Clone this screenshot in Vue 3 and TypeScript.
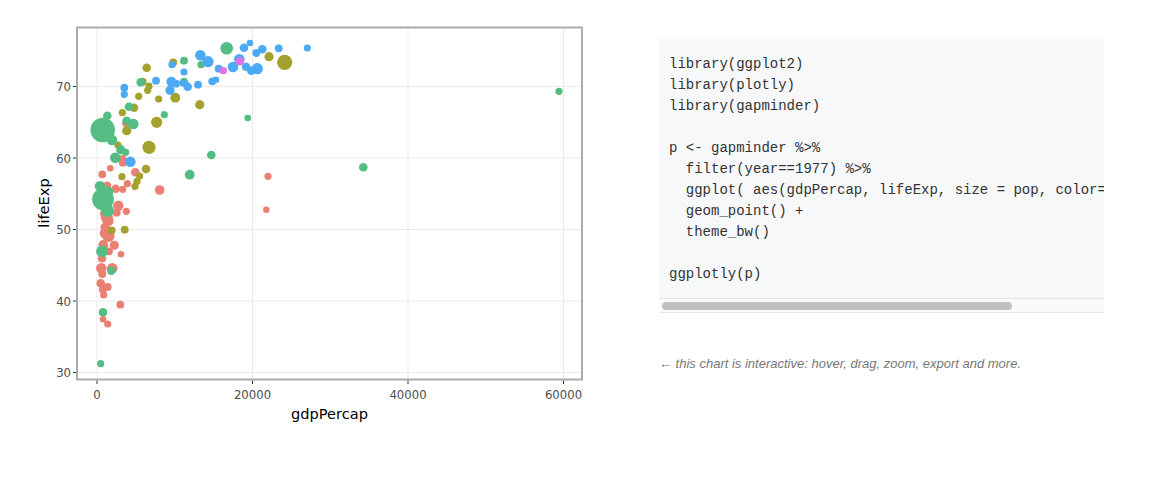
<script setup lang="ts">
type P = [number, number, number]
interface Series { color: string; pts: P[] }

const code = `library(ggplot2)
library(plotly)
library(gapminder)

p <- gapminder %>%
  filter(year==1977) %>%
  ggplot( aes(gdpPercap, lifeExp, size = pop, color=continent)) +
  geom_point() +
  theme_bw()

ggplotly(p)`

const grow = 0.6

const xTicks = [
  { x: 97, label: '0' },
  { x: 252.5, label: '20000' },
  { x: 408, label: '40000' },
  { x: 563.5, label: '60000' },
]
const yTicks = [
  { y: 86.5, label: '70' },
  { y: 158, label: '60' },
  { y: 229.5, label: '50' },
  { y: 301, label: '40' },
  { y: 372.5, label: '30' },
]

const series: Series[] = [
  {
    color: '#ea8074',
    pts: [
      [268, 176.3, 3], [266.3, 209.7, 2.7], [159.7, 190, 4.2], [135.3, 172.3, 3.7], [110.3, 168.3, 2.7],
      [102.3, 174.3, 3.3], [122.7, 162.7, 3.3], [122.3, 159, 3.3], [127.3, 183.7, 3], [107, 185.7, 3.7],
      [115.7, 188.7, 3.7], [122.7, 189.3, 3], [118.3, 205.7, 4.6], [126.3, 211.3, 3], [116.7, 212.7, 3.3],
      [105, 213.3, 4.5], [107.3, 219.3, 5], [106.7, 216.7, 5.5], [108.3, 220.7, 4.7], [105, 227.3, 4],
      [105, 233.3, 4.7], [108.3, 235.7, 5.7], [103.3, 245, 4.3], [114.3, 245.3, 4], [109, 251.3, 3.3],
      [121, 254.3, 2.7], [102, 258.3, 3.7], [101.3, 268.3, 4.7], [112.3, 268.3, 4.7], [102.3, 274, 3.3],
      [100.7, 283.3, 3.7], [107.7, 287, 3.3], [102.7, 289.3, 3.3], [103.7, 295, 3], [120.3, 304.7, 3.3],
      [103, 319.3, 2.7], [107.7, 324, 3], [125.7, 123.3, 3],
    ],
  },
  {
    color: '#a3a22e',
    pts: [
      [146.7, 67.7, 3.7], [173.3, 62.3, 3.3], [142.7, 81.7, 3.3], [149, 86, 3], [147.7, 90.3, 3],
      [138.7, 96.3, 3], [158.7, 99, 3], [175.3, 97.7, 4.3], [199.7, 104.7, 4], [122.3, 112.7, 3],
      [134, 107.7, 3.7], [156.7, 122.3, 5], [126.7, 130.7, 4], [118, 145, 3], [149, 147.3, 6],
      [146, 169, 3.7], [139.7, 176, 3], [137, 181.3, 3], [122, 176.7, 3], [135, 186.3, 3],
      [269, 56.7, 4], [284.7, 62.3, 7], [111.7, 230.3, 3.3], [124.7, 229.7, 3.3],
    ],
  },
  {
    color: '#54bd83',
    pts: [
      [226.7, 48.3, 5.7], [184, 60.7, 3.3], [201, 64.7, 3], [140.7, 82.3, 3.7], [184, 82, 3.7],
      [129, 106.7, 3.7], [107.3, 115.7, 3.7], [126.7, 120.7, 3.7], [133.3, 124, 4.7], [164.3, 114.7, 3],
      [102.7, 130, 11.7], [112, 140, 4.7], [120.7, 149.7, 4], [125.7, 152.3, 3], [115.3, 157.7, 4.7],
      [211.3, 155, 3.7], [189.7, 174.7, 4.3], [247.7, 118, 2.7], [100, 186.3, 4.7], [108, 191.7, 4.7],
      [103, 199.3, 10.3], [107.7, 210.7, 5.7], [102, 251.3, 5.3], [111.3, 270.7, 3.7], [103, 312.3, 3.7],
      [100.7, 363.7, 3], [363.3, 167.3, 3.7], [559, 91.3, 3],
    ],
  },
  {
    color: '#4ca9f3',
    pts: [
      [250, 43, 2.7], [244, 47.7, 3.7], [262.3, 49.3, 3.7], [256.3, 53, 3.3], [278.7, 48.3, 3.3],
      [307.3, 48, 3], [200.3, 55.3, 4.7], [208, 61.7, 5], [172, 64.7, 3], [184, 72, 3],
      [218.7, 68.7, 3.3], [239.3, 59.3, 4.7], [233, 67, 4.7], [246, 66.7, 3.7], [251.3, 70.7, 3.7],
      [257.3, 68.7, 5], [156, 80.7, 3.3], [171.3, 81.7, 4.3], [176, 83.7, 3.3], [183, 83, 3],
      [187.7, 86.7, 3.7], [198, 84.7, 3.3], [212.3, 81.3, 3.3], [216, 79.7, 2.7], [170, 90.3, 4],
      [124.3, 87.7, 3.3], [124.3, 94.3, 3], [130.3, 161.7, 4.7],
    ],
  },
  {
    color: '#df70e6',
    pts: [[223.3, 70.7, 3], [239.7, 61.3, 3.7]],
  },
]
</script>

<template>
  <div class="page">
    <svg class="chart" width="600" height="478" viewBox="0 0 600 478">
      <g class="grid">
        <line v-for="t in xTicks" :key="t.label" :x1="t.x" :x2="t.x" y1="28" y2="379" />
        <line v-for="t in yTicks" :key="t.label" x1="78" x2="581" :y1="t.y" :y2="t.y" />
      </g>
      <g v-for="s in series" :key="s.color" :fill="s.color">
        <circle v-for="(p, i) in s.pts" :key="i" :cx="p[0]" :cy="p[1]" :r="p[2] + grow" />
      </g>
      <rect class="frame" x="77" y="27.5" width="505" height="352" />
      <g class="tick">
        <line v-for="t in xTicks" :key="t.label" :x1="t.x" :x2="t.x" y1="380.5" y2="384" />
        <line v-for="t in yTicks" :key="t.label" x1="73" x2="76" :y1="t.y" :y2="t.y" />
      </g>
      <text v-for="t in xTicks" :key="t.label" class="tick-label" text-anchor="middle" :x="t.x" y="399">{{ t.label }}</text>
      <text v-for="t in yTicks" :key="t.label" class="tick-label" text-anchor="end" x="71" :y="t.y + 4.5">{{ t.label }}</text>
      <text class="axis-title" text-anchor="middle" x="329.5" y="419">gdpPercap</text>
      <text class="axis-title" text-anchor="middle" transform="translate(49 203) rotate(-90)">lifeExp</text>
    </svg>
    <div class="side">
      <div class="code-box">
        <pre class="code">{{ code }}</pre>
        <div class="scrollbar"><div class="thumb"></div></div>
      </div>
      <p class="note">← this chart is interactive: hover, drag, zoom, export and more.</p>
    </div>
  </div>
</template>

<style>
html, body { margin: 0; background: #fff; }
</style>

<style scoped>
.page {
  display: flex;
  width: 1166px;
  height: 478px;
  overflow: hidden;
  background: #fff;
}
.chart { display: block; flex: none; }
.grid line { stroke: #ebebeb; stroke-width: 1; }
.frame { fill: none; stroke: #ababab; stroke-width: 2; }
.tick line { stroke: #333; stroke-width: 1; }
.tick-label {
  font-family: "DejaVu Sans", sans-serif;
  font-size: 11.7px;
  fill: #4d4d4d;
}
.axis-title {
  font-family: "DejaVu Sans", sans-serif;
  font-size: 14.6px;
  fill: #000;
}
.side {
  width: 445px;
  margin-left: 59px;
  padding-top: 39px;
}
.code-box { background: #f7f8fa; }
.code {
  box-sizing: border-box;
  margin: 0;
  padding: 15px 10px 13px;
  height: 259px;
  overflow: hidden;
  font-family: "Liberation Mono", monospace;
  font-size: 14px;
  line-height: 21px;
  color: #333;
}
.scrollbar {
  box-sizing: border-box;
  height: 15px;
  padding: 3px;
  background: #fafafa;
  border-top: 1px solid #e8e8e8;
  border-bottom: 1px solid #e8e8e8;
}
.thumb {
  width: 350px;
  height: 8px;
  border-radius: 4px;
  background: #c0c0c0;
}
.note {
  margin: 43px 0 0;
  font-family: "Liberation Sans", Arial, sans-serif;
  font-style: italic;
  font-size: 13px;
  line-height: 16px;
  color: #777;
}
</style>
